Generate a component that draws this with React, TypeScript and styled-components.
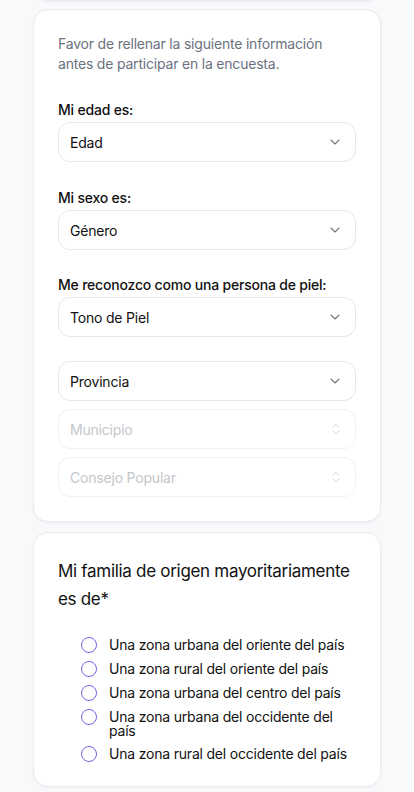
import React from "react";
import styled, { createGlobalStyle } from "styled-components";
import { ChevronDown, ChevronsUpDown } from "lucide-react";

const Global = createGlobalStyle`
  html, body { margin: 0; padding: 0; background: #f8f9fb; }
  body { font-family: Inter, "Noto Sans", sans-serif; color: #111; letter-spacing: -0.2px; -webkit-font-smoothing: antialiased; }
  * { box-sizing: border-box; }
`;

const Page = styled.div`
  width: 414px;
  padding: 0 33px 20px;
  display: flex;
  flex-direction: column;
  gap: 10px;
`;

const Card = styled.section`
  background: #fff;
  border: 1px solid #e9ebee;
  border-radius: 15px;
  box-shadow: 0 1px 3px rgba(16, 24, 40, 0.05);
  padding: 24px;
  display: flex;
  flex-direction: column;
`;

const PrevCard = styled(Card)`
  padding: 0;
  height: 40px;
  margin-top: -39px;
  margin-bottom: -2px;
`;

const Description = styled.p`
  margin: 0 0 26px;
  font-size: 14px;
  line-height: 20px;
  color: #6b7280;
`;

const Field = styled.div<{ $gap?: number }>`
  display: flex;
  flex-direction: column;
  margin-bottom: ${(p) => p.$gap ?? 25}px;
`;

const Label = styled.label`
  font-size: 14px;
  line-height: 20px;
  font-weight: 500;
  color: #111;
  margin-bottom: 2px;
`;

const SelectBox = styled.div<{ $disabled?: boolean }>`
  height: 40px;
  border: 1px solid ${(p) => (p.$disabled ? "#f0f1f3" : "#e5e7eb")};
  border-radius: 12px;
  background: #fff;
  display: flex;
  align-items: center;
  justify-content: space-between;
  padding: 0 12px 0 11px;
  font-size: 14px;
  color: ${(p) => (p.$disabled ? "#c4c6ca" : "#111")};
  svg { color: ${(p) => (p.$disabled ? "#d0d2d6" : "#737780")}; flex-shrink: 0; }
`;

const Stack = styled.div`
  display: flex;
  flex-direction: column;
  gap: 8px;
`;

const Title = styled.h2`
  margin: 0 0 24px;
  font-size: 17px;
  line-height: 28px;
  font-weight: 400;
  letter-spacing: -0.3px;
  color: #111;
`;

const RadioGroup = styled.div`
  display: flex;
  flex-direction: column;
  gap: 8px;
  padding-left: 23px;
`;

const Option = styled.label`
  display: flex;
  align-items: flex-start;
  gap: 12px;
  font-size: 14px;
  line-height: 14px;
  color: #111;
  min-height: 16px;
`;

const Radio = styled.span`
  width: 16px;
  height: 16px;
  border-radius: 50%;
  border: 1.5px solid #7b5fd9;
  flex-shrink: 0;
`;

const OptionText = styled.span`
  padding-top: 1px;
`;

function Select({ value, disabled }: { value: string; disabled?: boolean }) {
  return (
    <SelectBox $disabled={disabled}>
      <span>{value}</span>
      {disabled ? <ChevronsUpDown size={14} strokeWidth={1.6} /> : <ChevronDown size={16} strokeWidth={1.6} />}
    </SelectBox>
  );
}

const options = [
  "Una zona urbana del oriente del país",
  "Una zona rural del oriente del país",
  "Una zona urbana del centro del país",
  "Una zona urbana del occidente del país",
  "Una zona rural del occidente del país",
];

export default function App() {
  return (
    <>
      <Global />
      <Page>
        <PrevCard />
        <Card>
          <Description>
            Favor de rellenar la siguiente información antes de participar en la encuesta.
          </Description>
          <Field $gap={26}>
            <Label>Mi edad es:</Label>
            <Select value="Edad" />
          </Field>
          <Field $gap={25}>
            <Label>Mi sexo es:</Label>
            <Select value="Género" />
          </Field>
          <Field $gap={24}>
            <Label>Me reconozco como una persona de piel:</Label>
            <Select value="Tono de Piel" />
          </Field>
          <Stack>
            <Select value="Provincia" />
            <Select value="Municipio" disabled />
            <Select value="Consejo Popular" disabled />
          </Stack>
        </Card>
        <Card>
          <Title>Mi familia de origen mayoritariamente es de*</Title>
          <RadioGroup>
            {options.map((o) => (
              <Option key={o}>
                <Radio />
                <OptionText>{o}</OptionText>
              </Option>
            ))}
          </RadioGroup>
        </Card>
      </Page>
    </>
  );
}
